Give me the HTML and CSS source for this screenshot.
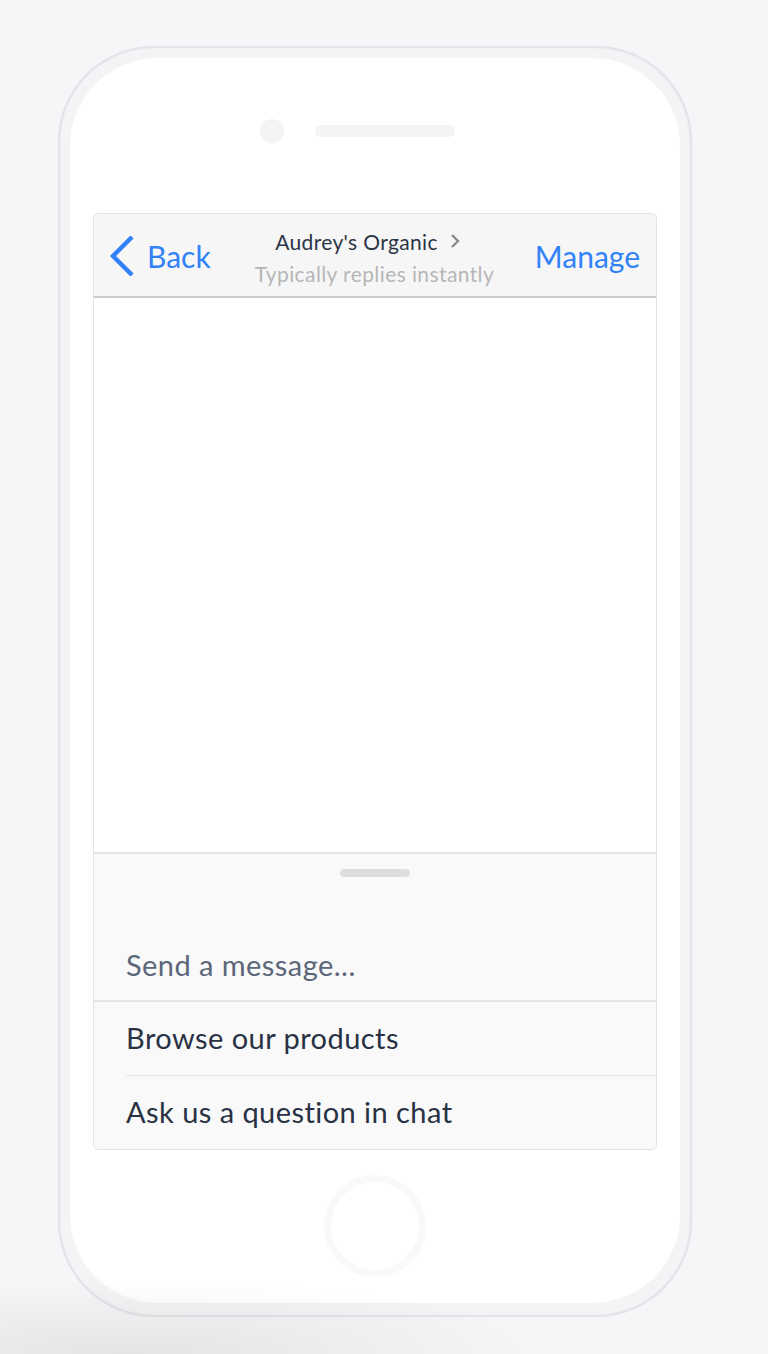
FILE: index.html
```html
<!DOCTYPE html>
<html lang="en">
<head>
<meta charset="utf-8">
<title>Chat preview</title>
<link rel="stylesheet" href="styles.css">
</head>
<body>
<div class="phone">
  <div class="screen">
    <div class="sensors">
      <span class="camera"></span>
      <span class="speaker"></span>
    </div>
    <div class="app">
      <div class="header">
        <div class="back">
          <svg class="back-icon" width="26" height="40" viewBox="0 0 26 40" aria-hidden="true">
            <path d="M21.5 2.5 L4 20 L21.5 37.5" fill="none" stroke="#3182f6" stroke-width="4.4" stroke-linecap="square" stroke-linejoin="miter"/>
          </svg>
          <span class="back-label">Back</span>
        </div>
        <div class="title">
          <div class="title-line">
            <span class="title-name">Audrey's Organic</span>
            <svg class="title-chev" width="10" height="16" viewBox="0 0 10 16" aria-hidden="true">
              <path d="M2 2 L8 8 L2 14" fill="none" stroke="#8a8a8a" stroke-width="2.4"/>
            </svg>
          </div>
          <div class="subtitle">Typically replies instantly</div>
        </div>
        <div class="manage">Manage</div>
      </div>
      <div class="chat"></div>
      <div class="panel">
        <div class="handle"></div>
        <div class="composer">Send a message...</div>
        <ul class="menu">
          <li class="menu-item">Browse our products</li>
          <li class="menu-item">Ask us a question in chat</li>
        </ul>
      </div>
    </div>
    <div class="home"></div>
  </div>
</div>
<div class="shade"></div>
</body>
</html>
```

FILE: styles.css
```css
* { box-sizing: border-box; }

html, body {
  margin: 0;
  padding: 0;
}

body {
  width: 768px;
  height: 1354px;
  overflow: hidden;
  background: #f5f6f8;
  font-family: Lato, "Open Sans", "Liberation Sans", sans-serif;
}

.phone {
  width: 634px;
  height: 1271px;
  margin: 46px 0 0 58px;
  padding: 10px 10px 12px 10px;
  border-radius: 96px;
  border: 2px solid #e3e4e7;
  background: #f3f4f6;
  box-shadow: 0 0 1px rgba(0,0,0,0.08), inset 0 0 2px rgba(0,0,0,0.06);
}

.screen {
  height: 100%;
  border-radius: 88px;
  background: #ffffff;
  display: flex;
  flex-direction: column;
  align-items: center;
  padding-top: 61px;
}

.sensors {
  display: flex;
  align-items: center;
  gap: 31px;
  height: 24px;
  margin-left: -35px;
}

.camera {
  width: 24px;
  height: 24px;
  border-radius: 50%;
  background: #f3f4f6;
}

.speaker {
  width: 140px;
  height: 12px;
  border-radius: 6px;
  background: #f3f4f6;
}

.app {
  margin-top: 70px;
  width: 564px;
  height: 937px;
  border: 1.5px solid #e3e3e3;
  border-radius: 5px;
  display: flex;
  flex-direction: column;
  overflow: hidden;
  background: #ffffff;
}

.header {
  height: 84px;
  flex: none;
  background: #f6f6f6;
  border-bottom: 2px solid #cbcbcb;
  display: grid;
  grid-template-columns: 1fr auto 1fr;
  align-items: center;
  padding: 0 16px 0 15px;
}

.back {
  display: flex;
  align-items: center;
  gap: 12px;
  color: #3182f6;
  margin-top: 1px;
}

.back-icon { display: block; }

.back-label {
  font-size: 30px;
  line-height: 34px;
  color: #3182f6;
}

.manage {
  justify-self: end;
  font-size: 30px;
  line-height: 34px;
  color: #3182f6;
  margin-top: 1px;
}

.title {
  text-align: center;
  margin-top: 6px;
}

.title-line {
  display: flex;
  align-items: center;
  justify-content: center;
  gap: 12px;
  margin-right: 14px;
}

.title-name {
  font-size: 21px;
  line-height: 24px;
  letter-spacing: 0.35px;
  color: #2b3445;
}

.title-chev {
  display: block;
  margin-top: -2px;
}

.subtitle {
  margin-top: 7px;
  font-size: 21px;
  line-height: 26px;
  letter-spacing: 0.4px;
  color: #b6b6b6;
}

.chat {
  flex: 1;
  background: #ffffff;
}

.panel {
  flex: none;
  background: #f9f9f9;
  border-top: 2px solid #e3e5e8;
}

.handle {
  width: 70px;
  height: 8px;
  border-radius: 4px;
  background: #dedede;
  margin: 15px auto 0;
}

.composer {
  padding: 71px 32px 18px;
  font-size: 29px;
  line-height: 34px;
  letter-spacing: 0.45px;
  color: #5b6679;
  border-bottom: 2px solid #e3e5e9;
}

.menu {
  list-style: none;
  margin: 0;
  padding: 0 0 0 32px;
}

.menu-item {
  padding: 19px 0 20px;
  font-size: 29px;
  line-height: 34px;
  letter-spacing: 0.45px;
  color: #283244;
}

.menu-item + .menu-item {
  border-top: 1.5px solid #e3e5e9;
}

.home {
  margin-top: 25px;
  width: 102px;
  height: 102px;
  border-radius: 50%;
  border: 7px solid #f8f9fa;
}

.shade {
  position: fixed;
  left: 0;
  bottom: 0;
  width: 768px;
  height: 160px;
  pointer-events: none;
  background: radial-gradient(ellipse 420px 75px at 130px 100%, rgba(0,0,0,0.07), rgba(0,0,0,0) 100%);
}
```
